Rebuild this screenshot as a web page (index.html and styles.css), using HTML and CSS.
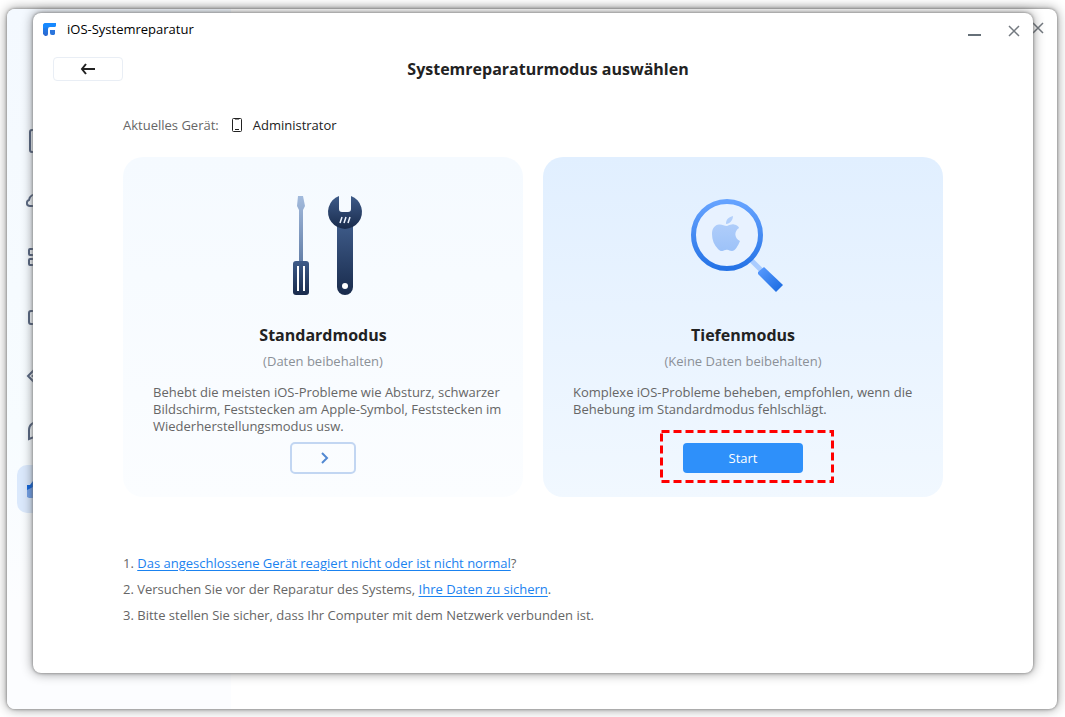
FILE: index.html
```html
<!DOCTYPE html>
<html lang="de">
<head>
<meta charset="utf-8">
<title>iOS-Systemreparatur</title>
<link rel="stylesheet" href="styles.css">
</head>
<body>
<div class="desktop">
  <div class="main-window">
    <nav class="sidebar" aria-label="Navigation">
      <button class="side-item" aria-label="Gerät"><svg width="20" height="24" viewBox="0 0 20 24"><rect x="4" y="1" width="14" height="22" rx="2"/></svg></button>
      <button class="side-item" aria-label="Cloud"><svg width="24" height="24" viewBox="0 0 24 24"><path d="M7 19H4C0 19 0 14 3 13C4 8 7 7 12 7C18 7 18 10 19 12C23 13 23 19 19 19Z"/></svg></button>
      <button class="side-item" aria-label="Apps"><svg width="22" height="24" viewBox="0 0 22 24"><rect x="3" y="4" width="6" height="6" rx="1"/><rect x="3" y="14" width="6" height="6" rx="1"/><rect x="13" y="4" width="6" height="6" rx="1"/><rect x="13" y="14" width="6" height="6" rx="1"/></svg></button>
      <button class="side-item" aria-label="Ordner"><svg width="22" height="24" viewBox="0 0 22 24"><rect x="3" y="8" width="16" height="13" rx="2"/></svg></button>
      <button class="side-item" aria-label="Übertragen"><svg width="22" height="24" viewBox="0 0 22 24"><path d="M9 8L2 15L9 22M11 13L7 15L11 17"/></svg></button>
      <button class="side-item" aria-label="Nachrichten"><svg width="22" height="24" viewBox="0 0 22 24"><path d="M3 20V11C3 0 20 1 20 11C20 19 12 20 8 18Z"/></svg></button>
      <button class="side-item side-item-active" aria-label="Werkzeuge"><svg width="24" height="24" viewBox="0 0 24 24"><path class="tool-top" d="M1 13V8H4L7 4H16V13Z"/><path class="tool-base" d="M1 13L7 10H21V21H3L1 20Z"/></svg></button>
    </nav>
    <button class="icon-button main-close" aria-label="Hauptfenster schließen"><svg width="12" height="12" viewBox="0 0 12 12"><path d="M1 1L11 11M11 1L1 11"/></svg></button>
  </div>

  <main class="dialog">
    <header class="titlebar">
      <svg class="logo" width="14" height="15" viewBox="0 0 14 15">
        <defs><linearGradient id="logo-side" x2="0" y2="1"><stop offset="0" stop-color="#168cff"/><stop offset="1" stop-color="#2d66cc"/></linearGradient></defs>
        <path d="M3 1H13V3Q13 5 11 5H7Q5 5 5 7V12Q5 14 3 14H2L0 12V4Q0 1 3 1Z" fill="url(#logo-side)"/>
        <path d="M3 1H13V3Q13 5 11 5H5L0 6V4Q0 1 3 1Z" fill="#1789ff"/>
        <path d="M7 8H12V12L11 13H9Q7 13 7 11Z" fill="#2b75dc"/>
      </svg>
      <span class="window-title">iOS-Systemreparatur</span>
      <button class="icon-button" aria-label="Minimieren"><svg width="13" height="12" viewBox="0 0 13 12"><path class="minimize" d="M0 10H13"/></svg></button>
      <button class="icon-button" aria-label="Schließen"><svg width="12" height="12" viewBox="0 0 12 12"><path d="M1 1L11 11M11 1L1 11"/></svg></button>
    </header>

    <div class="page-header">
      <button class="back-button" aria-label="Zurück"><svg width="16" height="12" viewBox="0 0 16 12"><path d="M6 1L2 6L6 11M2 6H15"/></svg></button>
      <h1>Systemreparaturmodus auswählen</h1>
    </div>

    <div class="content">
      <div class="device">
        <span class="device-label">Aktuelles Gerät:</span>
        <svg width="12" height="16" viewBox="0 0 12 16"><rect x="1.500" y="1.500" width="9" height="13" rx="1"/><path d="M4 12.500H8M4 2H8"/></svg>
        <span>Administrator</span>
      </div>

      <div class="cards">
        <section class="card card-standard">
          <svg class="illustration" width="120" height="120" viewBox="-7 0 120 120">
            <defs>
              <linearGradient id="shaft" x2="0" y2="1"><stop offset="0" stop-color="#a3bbdd"/><stop offset="1" stop-color="#647fa8"/></linearGradient>
              <linearGradient id="steel" x2="0" y2="1"><stop offset="0" stop-color="#3e5b89"/><stop offset="1" stop-color="#192b4c"/></linearGradient>
            </defs>
            <path d="M28 9H33L35 19L33 23V75H29V23L27 19Z" fill="url(#shaft)"/>
            <rect x="23" y="74" width="16" height="34" rx="3" fill="url(#steel)"/>
            <rect x="27" y="79" width="2" height="25" fill="#fff"/><rect x="33" y="79" width="2" height="25" fill="#fff"/>
            <path d="M67 37H83V100A8 8 0 0 1 67 100Z" fill="url(#steel)"/>
            <path d="M69 9V22Q69 25 72 25H78Q81 25 81 22V9A17 17 0 1 1 69 9Z" fill="url(#steel)"/>
            <path d="M72 30L70 36M76 30L74 36M80 30L78 36" stroke="#eef4ff" stroke-width="1.500"/>
            <circle cx="75" cy="99" r="3" fill="#fff"/>
          </svg>
          <h2>Standardmodus</h2>
          <p class="note">(Daten beibehalten)</p>
          <p class="description">Behebt die meisten iOS-Probleme wie Absturz, schwarzer Bildschirm, Feststecken am Apple-Symbol, Feststecken im Wiederherstellungsmodus usw.</p>
          <button class="next-button" aria-label="Standardmodus wählen"><svg width="12" height="14" viewBox="0 0 12 14"><path d="M5 2L10 7L5 12"/></svg></button>
        </section>

        <section class="card card-deep">
          <svg class="illustration" width="120" height="120" viewBox="0 0 120 120">
            <defs>
              <linearGradient id="lens" x2="0" y2="1"><stop offset="0" stop-color="#66a3ff"/><stop offset="1" stop-color="#2573e6"/></linearGradient>
              <linearGradient id="handle" x2="1" y2="1"><stop offset="0" stop-color="#5b9cff"/><stop offset="1" stop-color="#1768df"/></linearGradient>
              <linearGradient id="apple" x2="0" y2="1"><stop offset="0" stop-color="#b5d1fb"/><stop offset="1" stop-color="#9dc2f8"/></linearGradient>
            </defs>
            <path d="M68 73L80 85" stroke="#aaccff" stroke-width="5"/>
            <circle cx="44" cy="48" r="33.500" fill="#e8f2ff" stroke="url(#lens)" stroke-width="5"/>
            <path d="M75 85L81 80L100 98L93 105L75 87Z" fill="url(#handle)"/>
            <path d="M43 37C43 32 46 30 50 29C50 33 47 37 43 37ZM44 39C47 38 49 37 51 37.500C54 38 56 40 56 41C51 44 51 51 57 54C55 59 52 64 49 64C46 64 46 62 42.500 63C39 64 38 65 35 62C31 58 29 53 29 47C29 41 32 38 36 37.500C39 37 41 39 44 39Z" fill="url(#apple)"/>
          </svg>
          <h2>Tiefenmodus</h2>
          <p class="note">(Keine Daten beibehalten)</p>
          <p class="description">Komplexe iOS-Probleme beheben, empfohlen, wenn die Behebung im Standardmodus fehlschlägt.</p>
          <div class="start-area">
            <button class="start-button">Start</button>
            <svg class="highlight" width="174" height="53" viewBox="0 0 174 53"><rect x="1.500" y="1.500" width="171" height="50"/></svg>
          </div>
        </section>
      </div>

      <ol class="hints">
        <li><a href="#verbindung">Das angeschlossene Gerät reagiert nicht oder ist nicht normal</a>?</li>
        <li>Versuchen Sie vor der Reparatur des Systems, <a href="#sichern">Ihre Daten zu sichern</a>.</li>
        <li>Bitte stellen Sie sicher, dass Ihr Computer mit dem Netzwerk verbunden ist.</li>
      </ol>
    </div>
  </main>
</div>
</body>
</html>
```

FILE: styles.css
```css
* { box-sizing: border-box; }
body {
  margin: 0;
  background: #fff;
  color: #222;
  font: 13px/17px "Open Sans", "Noto Sans", sans-serif;
}
button { padding: 0; border: 0; background: none; font: inherit; cursor: pointer; }
svg { display: block; }
h1, h2, p { margin: 0; }

.desktop {
  position: relative;
  display: flex;
  min-height: 100vh;
  padding: 9px 8px 8px 7px;
  overflow: hidden;
}
.main-window {
  display: flex;
  flex: 1;
  justify-content: space-between;
  align-items: flex-start;
  border-radius: 8px;
  background: #fff;
  box-shadow: 0 0 3px #777, 0 0 12px rgba(0, 0, 0, .45);
}
.sidebar {
  display: flex;
  flex-direction: column;
  gap: 10px;
  align-self: stretch;
  width: 224px;
  padding: 108px 10px 0;
  border-radius: 8px 0 0 8px;
  background: linear-gradient(#f4f9ff, #f7fcff 60%, #fcfdff 85%);
}
.side-item {
  display: flex;
  align-items: center;
  height: 48px;
  padding-left: 9px;
  border-radius: 10px;
}
.side-item svg { fill: none; stroke: #5d6b85; stroke-width: 2; }
.side-item-active { background: #dbe9fc; }
.side-item-active svg { stroke: none; }
.tool-top { fill: #1769dc; }
.tool-base { fill: #76a3e8; }

.icon-button { display: grid; place-items: center; width: 20px; height: 20px; }
.icon-button svg { fill: none; stroke: #747a80; stroke-width: 1.5; }
.main-close { margin: 9px 9px 0 0; }

.dialog {
  position: absolute;
  inset: 13px 32px 44px 33px;
  border-radius: 8px;
  background: #fff;
  box-shadow: 0 0 3px #777, 0 0 12px rgba(0, 0, 0, .45);
}
.titlebar {
  display: flex;
  align-items: center;
  gap: 20px;
  height: 36px;
  padding: 0 9px 0 10px;
}
.window-title { flex: 1; margin: 0 0 4px -10px; color: #000; }
.logo { margin-bottom: 4px; }
.icon-button .minimize { stroke: #667078; stroke-width: 2; }

.page-header {
  display: flex;
  align-items: center;
  padding: 8px 60px 0 20px;
}
.back-button {
  display: grid;
  place-items: center;
  width: 70px;
  height: 24px;
  border: 1px solid #e9eef5;
  border-radius: 4px;
}
.back-button svg { fill: none; stroke: #222; stroke-width: 2; }
h1 { flex: 1; text-align: center; font-size: 16px; line-height: 24px; }

.content { padding: 34px 90px 0; }
.device { display: flex; align-items: center; gap: 12px; height: 20px; }
.device span:last-child { margin-left: -2px; }
.device svg { fill: none; stroke: #222; stroke-width: 1; }
.device-label { color: #666; }

.cards { display: grid; grid-template-columns: 1fr 1fr; gap: 20px; margin-top: 22px; }
.card {
  display: flex;
  flex-direction: column;
  align-items: center;
  min-height: 340px;
  padding: 30px 20px 23px;
  border-radius: 20px;
}
.card-standard { background: linear-gradient(#f5faff, #f9fcff 70%, #fbfdff); }
.card-deep { padding-bottom: 24px; background: linear-gradient(#e1efff, #f1f8ff); }
h2 { margin-top: 16px; font-size: 16px; line-height: 24px; }
.note { margin-top: 6px; color: #8b9097; }
.description { align-self: stretch; margin-top: 14px; padding-left: 10px; color: #666; }

.next-button {
  display: grid;
  place-items: center;
  width: 66px;
  height: 32px;
  margin-top: auto;
  border: 2px solid #c2d6f2;
  border-radius: 5px;
}
.next-button svg { fill: none; stroke: #5289d2; stroke-width: 2; }
.start-area { position: relative; margin-top: auto; }
.start-button {
  display: block;
  width: 120px;
  height: 30px;
  border-radius: 4px;
  background: #2e90fa;
  color: #fff;
}
.highlight {
  position: absolute;
  top: -13px;
  left: -23px;
  fill: none;
  stroke: #f00;
  stroke-width: 3;
  stroke-dasharray: 8 4;
  pointer-events: none;
}

.hints {
  display: grid;
  gap: 9px;
  margin: 58px 0 0;
  padding: 0;
  color: #666;
  list-style-position: inside;
}
a { color: #1a82f0; text-underline-offset: 2px; }
```
